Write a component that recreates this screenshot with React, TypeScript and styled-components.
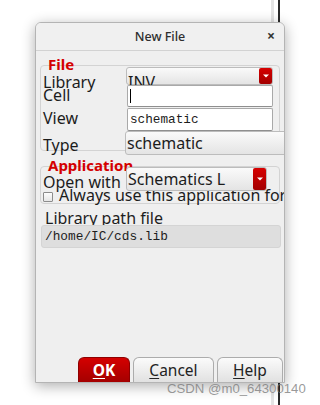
import React from 'react';
import styled, { createGlobalStyle } from 'styled-components';

const GlobalStyle = createGlobalStyle`
  html, body {
    margin: 0;
    padding: 0;
    background: #ffffff;
  }
  body {
    font-family: "Noto Sans", "DejaVu Sans", sans-serif;
    color: #1e1e1e;
  }
`;

const Desktop = styled.div`
  position: relative;
  width: 320px;
  height: 405px;
  overflow: hidden;
  background: #ffffff;
`;

// edges of a window that sits behind the dialog
const Edge = styled.div<{ $x: number; $w: number; $color: string }>`
  position: absolute;
  top: 0;
  bottom: 0;
  left: ${(p) => p.$x}px;
  width: ${(p) => p.$w}px;
  background: ${(p) => p.$color};
`;

const Dialog = styled.div`
  position: absolute;
  left: 35px;
  top: 22px;
  width: 250px;
  height: 361px;
  box-sizing: border-box;
  border: 1px solid #b4b4b4;
  border-radius: 6px 6px 0 0;
  background: #efefef;
  box-shadow: 0 3px 14px rgba(0, 0, 0, 0.32);
  overflow: hidden;
  display: flex;
  flex-direction: column;
`;

const TitleBar = styled.div`
  position: relative;
  height: 28px;
  flex: none;
  box-sizing: border-box;
  border-bottom: 1px solid #d2d2d2;
  background: #f0f0f0;
  display: flex;
  align-items: center;
  justify-content: center;
  font-size: 12.5px;
  font-weight: 500;
  color: #2e2e2e;
`;

const CloseButton = styled.span`
  position: absolute;
  right: 9px;
  top: 6px;
  font-size: 14px;
  font-weight: 700;
  color: #333;
  line-height: 14px;
`;

const Body = styled.div`
  flex: 1;
  padding: 0 4px;
  display: flex;
  flex-direction: column;
`;

const Group = styled.div<{ $top: number; $height: number }>`
  position: relative;
  margin-top: ${(p) => p.$top}px;
  height: ${(p) => p.$height}px;
  box-sizing: border-box;
  border: 1px solid #d3d3d3;
  border-radius: 4px;
  display: flex;
`;

const GroupTitle = styled.div`
  position: absolute;
  left: 7px;
  top: -9px;
  font-size: 15px;
  line-height: 15px;
  font-weight: 700;
  color: #d40000;
  white-space: nowrap;
`;

const GroupInner = styled.div`
  flex: 1;
  display: flex;
  flex-direction: column;
`;

const FieldRow = styled.div`
  display: flex;
`;

const LabelColumn = styled.div<{ $top: number }>`
  width: 85px;
  flex: none;
  box-sizing: border-box;
  padding: ${(p) => p.$top}px 0 0 2px;
  display: flex;
  flex-direction: column;
`;

const Label = styled.div<{ $gap?: number }>`
  margin-top: ${(p) => p.$gap ?? 0}px;
  font-size: 16px;
  line-height: 13px;
  height: 13px;
  white-space: nowrap;
  color: #1c1c1c;
`;

const FieldColumn = styled.div`
  flex: 1;
  padding-top: 1px;
  display: flex;
  flex-direction: column;
  min-width: 0;
`;

const Combo = styled.div<{ $width: number; $height: number; $shift?: number }>`
  position: relative;
  width: ${(p) => p.$width}px;
  height: ${(p) => p.$height}px;
  margin-left: ${(p) => p.$shift ?? 0}px;
  flex: none;
  box-sizing: border-box;
  border: 1px solid #bcbcbc;
  border-radius: 3px;
  background: linear-gradient(#fafafa, #e4e4e4);
  display: flex;
  align-items: stretch;
`;

const ComboText = styled.div<{ $pad?: number }>`
  flex: 1;
  padding: ${(p) => p.$pad ?? 0}px 0 0 1px;
  font-size: 16px;
  line-height: 22px;
  white-space: nowrap;
  color: #1c1c1c;
`;

const DropButton = styled.div`
  width: 13px;
  flex: none;
  border-radius: 2px;
  background: linear-gradient(#d60000, #a30000);
  display: flex;
  align-items: center;
  justify-content: center;
`;

const TextField = styled.div<{ $height: number; $gap?: number }>`
  position: relative;
  margin: ${(p) => p.$gap ?? 0}px 0 0 1px;
  width: 146px;
  height: ${(p) => p.$height}px;
  flex: none;
  box-sizing: border-box;
  border: 1px solid #a9a9a9;
  border-bottom-color: #8f8f8f;
  border-radius: 2px;
  background: #ffffff;
  padding-left: 2px;
  display: flex;
  align-items: center;
  font-family: "Liberation Mono", monospace;
  font-size: 12.7px;
  color: #1c1c1c;
`;

const Caret = styled.span`
  width: 1px;
  height: 14px;
  background: #000;
`;

const CheckRow = styled.div`
  display: flex;
  align-items: center;
  gap: 6px;
  margin-top: -3px;
  padding-left: 2px;
  white-space: nowrap;
`;

const CheckBox = styled.span`
  width: 10px;
  height: 10px;
  flex: none;
  box-sizing: border-box;
  border: 1px solid #8c8c8c;
  border-radius: 1px;
  background: linear-gradient(#fdfdfd, #e6e6e6);
  margin-top: 4px;
`;

const PathLabel = styled.div`
  margin: 8px 0 0 5px;
  font-size: 16px;
  line-height: 13px;
  height: 13px;
  white-space: nowrap;
`;

const PathField = styled.div`
  position: relative;
  margin-left: 1px;
  width: 240px;
  height: 23px;
  box-sizing: border-box;
  border: 1px solid #d4d4d4;
  border-radius: 3px;
  background: #dedede;
  padding-left: 3px;
  display: flex;
  align-items: center;
  font-family: "Liberation Mono", monospace;
  font-size: 12.8px;
  color: #1c1c1c;
`;

const Footer = styled.div`
  flex: none;
  display: flex;
  justify-content: flex-end;
  gap: 3px;
  padding-right: 1px;
`;

const Button = styled.button<{ $width: number; $primary?: boolean }>`
  width: ${(p) => p.$width}px;
  height: 25px;
  box-sizing: border-box;
  padding: 0;
  border: 1px solid ${(p) => (p.$primary ? '#8e0000' : '#acacac')};
  border-bottom: none;
  border-radius: 6px 6px 0 0;
  background: ${(p) =>
    p.$primary ? 'linear-gradient(#d40000, #a40000)' : 'linear-gradient(#fbfbfb, #e1e1e1)'};
  color: ${(p) => (p.$primary ? '#ffffff' : '#222222')};
  font-family: "Noto Sans", sans-serif;
  font-size: 15.5px;
  font-weight: ${(p) => (p.$primary ? 700 : 400)};
  line-height: 22px;

  u {
    text-underline-offset: 2px;
  }
`;

const Watermark = styled.div`
  position: absolute;
  left: 167px;
  top: 381px;
  font-family: "Liberation Sans", Arial, sans-serif;
  font-size: 13.2px;
  color: rgba(120, 120, 120, 0.75);
  white-space: nowrap;
`;

const Arrow: React.FC = () => (
  <svg width="6" height="4" viewBox="0 0 6 4">
    <path d="M0 0.5 H6 L3 3.5 Z" fill="#ffffff" />
  </svg>
);

const App: React.FC = () => {
  return (
    <>
      <GlobalStyle />
      <Desktop>
        <Edge $x={271} $w={3} $color="#e4e4e4" />
        <Edge $x={278} $w={2} $color="#2a2a2a" />

        <Dialog>
          <TitleBar>
            New File
            <CloseButton>×</CloseButton>
          </TitleBar>

          <Body>
            <Group $top={14} $height={86}>
              <GroupTitle>File</GroupTitle>
              <LabelColumn $top={10}>
                <Label>Library</Label>
                <Label>Cell</Label>
                <Label $gap={10}>View</Label>
                <Label $gap={14}>Type</Label>
              </LabelColumn>
              <FieldColumn>
                <Combo $width={147} $height={18}>
                  <ComboText $pad={3}>INV</ComboText>
                  <DropButton>
                    <Arrow />
                  </DropButton>
                </Combo>
                <TextField $height={22}>
                  <Caret />
                </TextField>
                <TextField $height={23} $gap={1}>
                  schematic
                </TextField>
                <Combo $width={200} $height={24} $shift={-1}>
                  <ComboText>schematic</ComboText>
                </Combo>
              </FieldColumn>
            </Group>

            <Group $top={15} $height={38}>
              <GroupTitle>Application</GroupTitle>
              <GroupInner>
                <FieldRow>
                  <LabelColumn $top={9}>
                    <Label>Open with</Label>
                  </LabelColumn>
                  <Combo $width={141} $height={24}>
                    <ComboText>Schematics L</ComboText>
                    <DropButton>
                      <Arrow />
                    </DropButton>
                  </Combo>
                </FieldRow>
                <CheckRow>
                  <CheckBox />
                  <Label>Always use this application for</Label>
                </CheckRow>
              </GroupInner>
            </Group>

            <PathLabel>Library path file</PathLabel>
            <PathField>/home/IC/cds.lib</PathField>
          </Body>

          <Footer>
            <Button $width={52} $primary>
              <u>O</u>K
            </Button>
            <Button $width={81}>
              <u>C</u>ancel
            </Button>
            <Button $width={66}>
              <u>H</u>elp
            </Button>
          </Footer>
        </Dialog>

        <Watermark>CSDN @m0_64300140</Watermark>
      </Desktop>
    </>
  );
};

export default App;
